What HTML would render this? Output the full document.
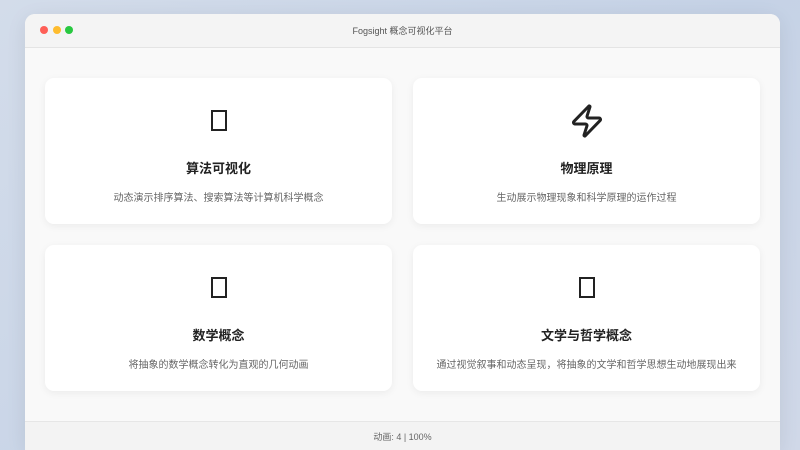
<!DOCTYPE html>
<html style="overflow:hidden;height:450px"><head><meta charset="utf-8"><style>
*{margin:0;padding:0;box-sizing:border-box}
body{width:800px;height:450px;overflow:hidden;background:linear-gradient(135deg,#d3dcea,#c5d2e6 60%,#d0d8e8);font-family:"Liberation Sans","Noto Sans CJK SC",sans-serif;position:relative}
.win{position:absolute;left:25px;top:14px;width:755px;height:436px;background:#f9f9f9;border-radius:10px 10px 0 0;overflow:hidden;box-shadow:0 4px 20px rgba(0,0,0,.08)}
.tb{height:34px;background:#f4f4f4;border-bottom:1px solid #e4e4e4;position:relative}
.dot{position:absolute;top:12px;width:8px;height:8px;border-radius:50%}
.tt{position:absolute;left:0;right:0;top:10px;text-align:center;font-size:9px;color:#555}
.card{position:absolute;width:347px;height:146px;background:#fff;border-radius:9px;box-shadow:0 2px 8px rgba(0,0,0,.06);text-align:center}
.ic{position:absolute;left:50%;top:32px;width:16px;height:21px;margin-left:-8px;border:2px solid #222}
.card svg{position:absolute;left:50%;top:25px;margin-left:-18px}
.h{position:absolute;left:0;right:0;top:80px;font-size:13px;font-weight:bold;color:#222}
.d{position:absolute;left:0;right:0;top:111px;font-size:10px;color:#666}
.ft{position:absolute;left:0;right:0;top:407px;height:40px;background:#f3f3f3;border-top:1px solid #e6e6e6;text-align:center;font-size:9px;color:#666;padding-top:8px}
</style></head><body>
<div class="win">
<div class="tb"><div class="dot" style="left:15px;background:#fe5f57"></div><div class="dot" style="left:28px;background:#febc2e"></div><div class="dot" style="left:40px;background:#28c840"></div><div class="tt">Fogsight 概念可视化平台</div></div>
<div class="card" style="left:20px;top:64px"><div class="ic"></div><div class="h">算法可视化</div><div class="d">动态演示排序算法、搜索算法等计算机科学概念</div></div>
<div class="card" style="left:388px;top:64px"><svg width="36" height="36" viewBox="0 0 24 24" fill="none" stroke="#222" stroke-width="2" stroke-linejoin="round"><path d="M4 14a1 1 0 0 1-.78-1.63l9.9-10.2a.5.5 0 0 1 .86.46l-1.920 6.02A1 1 0 0 0 13 10h7a1 1 0 0 1 .78 1.63l-9.9 10.2a.5.5 0 0 1-.86-.46l1.92-6.02A1 1 0 0 0 11 14z"/></svg><div class="h">物理原理</div><div class="d">生动展示物理现象和科学原理的运作过程</div></div>
<div class="card" style="left:20px;top:231px"><div class="ic"></div><div class="h">数学概念</div><div class="d">将抽象的数学概念转化为直观的几何动画</div></div>
<div class="card" style="left:388px;top:231px"><div class="ic"></div><div class="h">文学与哲学概念</div><div class="d">通过视觉叙事和动态呈现，将抽象的文学和哲学思想生动地展现出来</div></div>
<div class="ft">动画: 4 | 100%</div>
</div>
</body></html>
